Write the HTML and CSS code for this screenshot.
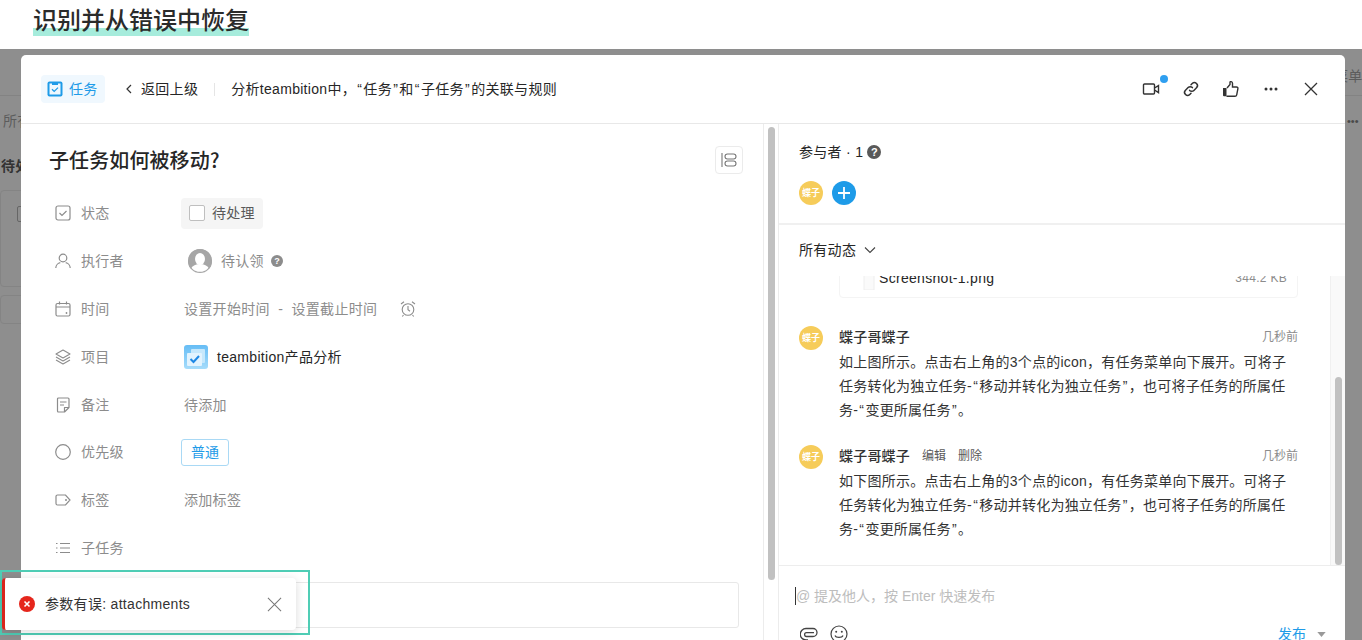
FILE: index.html
```html
<!DOCTYPE html>
<html lang="zh">
<head>
<meta charset="utf-8">
<title>识别并从错误中恢复</title>
<link rel="stylesheet" href="styles.css">
</head>
<body>
<header class="page-head"><h1 class="page-title">识别并从错误中恢复</h1></header>
<main class="stage">
  <div class="behind">
    <div class="behind-line"></div>
    <span class="behind-text b-all">所有</span>
    <span class="behind-text b-todo">待处</span>
    <div class="behind-card b-card1"><span class="b-check"></span></div>
    <div class="behind-card b-card2"></div>
    <span class="behind-text b-menu">菜单</span>
    <span class="behind-text b-dots">•••</span>
  </div>
  <section class="modal">
    <div class="modal-head">
      <span class="type-chip">
        <svg class="ic16" viewBox="0 0 16 16"><rect x=".5" y=".5" width="15" height="15" rx="2" fill="#1e9be8"/><rect x="2.500" y="2.500" width="11" height="11" fill="#eef8fe"/><rect x="5" y="2" width="6" height="2" fill="#1e9be8"/><path d="M5 8.200l2.200 2.200 3.800-3.800" fill="none" stroke="#1e9be8" stroke-width="1.300"/></svg>
        任务
      </span>
      <span class="back">
        <svg class="ic10" viewBox="0 0 10 10"><path d="M7 1L3 5l4 4" fill="none" stroke="#333" stroke-width="1.2"/></svg>
        返回上级
      </span>
      <span class="crumb-sep"></span>
      <span class="crumb">分析teambition中，<span class="q">“</span>任务<span class="q">”</span>和<span class="q">“</span>子任务<span class="q">”</span>的关联与规则</span>
      <div class="head-actions">
        <span class="act act-video">
          <svg class="ic18" viewBox="0 0 18 18"><rect x="1.500" y="4" width="11" height="10" rx="1" fill="none" stroke="#333" stroke-width="1.400"/><path d="M12.500 8l4-2.400v7L12.500 10" fill="none" stroke="#333" stroke-width="1.400"/></svg>
          <i class="dot"></i>
        </span>
        <span class="act">
          <svg class="ic18" viewBox="0 0 18 18"><g fill="none" stroke="#333" stroke-width="1.500" stroke-linecap="round"><path d="M7.600 10.400a3 3 0 0 0 4.300 0l2.600-2.600a3 3 0 0 0-4.300-4.300L9 4.700"/><path d="M10.400 7.600a3 3 0 0 0-4.300 0l-2.600 2.600a3 3 0 0 0 4.300 4.300L9 13.300"/></g></svg>
        </span>
        <span class="act">
          <svg class="ic18" viewBox="0 0 18 18"><path d="M1 8h3.500v8.300H2a1 1 0 0 1-1-1z" fill="#333"/><path d="M5 8l3-3.500V2.200c0-.9 2.300-.9 2.500 1V7h4c1 0 1.600.8 1.400 1.700l-1.200 6.100c-.2.900-.8 1.500-1.700 1.500H4.500" fill="none" stroke="#333" stroke-width="1.400"/></svg>
        </span>
        <span class="act">
          <svg class="ic18" viewBox="0 0 18 18"><g fill="#333"><circle cx="4" cy="9" r="1.500"/><circle cx="9" cy="9" r="1.500"/><circle cx="14" cy="9" r="1.500"/></g></svg>
        </span>
        <span class="act">
          <svg class="ic18" viewBox="0 0 18 18"><path d="M3 3l12 12M15 3L3 15" stroke="#333" stroke-width="1.300" fill="none"/></svg>
        </span>
      </div>
    </div>
    <div class="modal-body">
      <div class="left-pane">
        <div class="title-row">
          <h2 class="task-title">子任务如何被移动?</h2>
          <span class="layout-btn">
            <svg class="ic16" viewBox="0 0 16 16"><g fill="none" stroke="#777" stroke-width="1.100"><path d="M1 1v14"/><rect x="4" y="2" width="11" height="5" rx="2.500"/><rect x="4" y="9" width="11" height="5" rx="2.500"/></g></svg>
          </span>
        </div>
        <div class="row">
          <svg class="row-ic" viewBox="0 0 16 16"><rect x="1" y="1" width="14" height="14" rx="2" fill="none" stroke="#8c8c8c" stroke-width="1.200"/><path d="M4.500 8l2.500 2.500 4.500-4.500" fill="none" stroke="#8c8c8c" stroke-width="1.200"/></svg>
          <span class="row-label">状态</span>
          <span class="status-chip"><i class="status-box"></i>待处理</span>
        </div>
        <div class="row">
          <svg class="row-ic" viewBox="0 0 16 16"><g fill="none" stroke="#8c8c8c" stroke-width="1.200"><circle cx="8" cy="5" r="3.800"/><path d="M.8 15c0-3 2.500-5 4.500-5.400M15.200 15c0-3-2.500-5-4.500-5.400"/></g></svg>
          <span class="row-label">执行者</span>
          <span class="assignee">
            <svg class="ic24" viewBox="0 0 24 24"><circle cx="12" cy="12" r="12" fill="#a6a6a6"/><ellipse cx="12" cy="10" rx="5" ry="6" fill="#fff"/><path d="M2.500 20c2-3.500 5.500-5 9.500-5s7.500 1.500 9.500 5A12 12 0 0 1 2.500 20z" fill="#fff"/><circle cx="12" cy="12" r="11.400" fill="none" stroke="#a6a6a6" stroke-width="1.200"/></svg>
            <span class="muted">待认领</span>
            <span class="help-small">?</span>
          </span>
        </div>
        <div class="row">
          <svg class="row-ic" viewBox="0 0 16 16"><g fill="none" stroke="#8c8c8c" stroke-width="1.200"><rect x="1" y="2.500" width="14" height="12.500" rx="1.500"/><path d="M1 6h14M4.500 .5v3M11.500 .5v3"/></g><circle cx="11.500" cy="12" r=".9" fill="#8c8c8c"/></svg>
          <span class="row-label">时间</span>
          <span class="muted">设置开始时间 &nbsp;-&nbsp; 设置截止时间</span>
          <svg class="alarm" viewBox="0 0 16 16"><g fill="none" stroke="#8c8c8c" stroke-width="1.100"><circle cx="8" cy="8.500" r="5.800"/><path d="M8 5v3.800l2 1.500M1 3l3-2.300M15 3l-3-2.300M3.500 14l-1.200 1.500M12.500 14l1.200 1.500"/></g></svg>
        </div>
        <div class="row">
          <svg class="row-ic" viewBox="0 0 16 16"><g fill="none" stroke="#8c8c8c" stroke-width="1.100" stroke-linejoin="round"><path d="M8 1l7 4-7 4-7-4z"/><path d="M1 8l7 4 7-4M1 11l7 4 7-4"/></g></svg>
          <span class="row-label">项目</span>
          <span class="project">
            <svg class="ic24" viewBox="0 0 24 24"><defs><linearGradient id="projectFill" x1="0" y1="0" x2="0" y2="1"><stop offset="0" stop-color="#66bdf5"/><stop offset="1" stop-color="#a6dcfb"/></linearGradient></defs><rect width="24" height="24" rx="3" fill="url(#projectFill)"/><rect x="7" y="4" width="14" height="14" rx="1" fill="#c6e8fc"/><rect x="3" y="8" width="15" height="13" rx="1" fill="#e2f3fe"/><path d="M6.500 14l3 3 5.500-6" fill="none" stroke="#1e88e5" stroke-width="2"/></svg>
            <span class="strong">teambition产品分析</span>
          </span>
        </div>
        <div class="row">
          <svg class="row-ic" viewBox="0 0 16 16"><g fill="none" stroke="#8c8c8c" stroke-width="1.200" stroke-linejoin="round"><path d="M9.500 15H3.500a1 1 0 0 1-1-1V2a1 1 0 0 1 1-1h9.500a1 1 0 0 1 1 1v8.500z"/><path d="M5 5h6.500M5 8h4M9.500 15v-4.500H14"/></g></svg>
          <span class="row-label">备注</span>
          <span class="muted">待添加</span>
        </div>
        <div class="row">
          <svg class="row-ic" viewBox="0 0 16 16"><circle cx="8" cy="8" r="7.300" fill="none" stroke="#8c8c8c" stroke-width="1.200"/></svg>
          <span class="row-label">优先级</span>
          <span class="priority">普通</span>
        </div>
        <div class="row">
          <svg class="row-ic" viewBox="0 0 16 16"><path d="M2.500 3h8l4.500 5-4.500 5h-8a1.500 1.500 0 0 1-1.500-1.500v-7A1.500 1.500 0 0 1 2.500 3z" fill="none" stroke="#8c8c8c" stroke-width="1.200"/><circle cx="11" cy="8" r="1" fill="#8c8c8c"/></svg>
          <span class="row-label">标签</span>
          <span class="muted">添加标签</span>
        </div>
        <div class="row">
          <svg class="row-ic" viewBox="0 0 16 16"><g fill="none" stroke="#8c8c8c" stroke-width="1.200"><path d="M5 3.500h10M5 8h10M5 12.500h10"/><path d="M1 3.500h1.500M1 8h1.500M1 12.500h1.500"/></g></svg>
          <span class="row-label">子任务</span>
        </div>
        <div class="subtask-box"></div>
      </div>
      <div class="pane-scroll"><div class="pane-thumb"></div></div>
      <div class="right-pane">
        <div class="members">
          <div class="members-title">参与者 · 1 <span class="help-big">?</span></div>
          <div class="members-row">
            <span class="avatar">蝶子</span>
            <span class="add-member">
              <svg class="ic12" viewBox="0 0 12 12"><path d="M6 0v12M0 6h12" stroke="#fff" stroke-width="1.800"/></svg>
            </span>
          </div>
        </div>
        <div class="feed-head">所有动态
          <svg class="ic12" viewBox="0 0 12 12"><path d="M1 3.500l5 5 5-5" fill="none" stroke="#444" stroke-width="1.100"/></svg>
        </div>
        <div class="feed">
          <div class="feed-list">
            <div class="file-card">
              <svg class="file-ic" viewBox="0 0 12 24"><path d="M1 0h10v24H1z" fill="#fafafa" stroke="#eeeeee"/></svg>
              <span class="file-name">Screenshot-1.png</span>
              <span class="file-size">344.2 KB</span>
            </div>
            <article class="comment">
              <span class="avatar">蝶子</span>
              <div class="comment-main">
                <div class="comment-head"><span class="author">蝶子哥蝶子</span><span class="time">几秒前</span></div>
                <p class="comment-text">如上图所示。点击右上角的3个点的icon，有任务菜单向下展开。可将子<br>任务转化为独立任务-<span class="q">“</span>移动并转化为独立任务<span class="q">”</span>，也可将子任务的所属任<br>务-<span class="q">“</span>变更所属任务<span class="q">”</span>。</p>
              </div>
            </article>
            <article class="comment">
              <span class="avatar">蝶子</span>
              <div class="comment-main">
                <div class="comment-head"><span class="author">蝶子哥蝶子</span><span class="link">编辑</span><span class="link">删除</span><span class="time">几秒前</span></div>
                <p class="comment-text">如下图所示。点击右上角的3个点的icon，有任务菜单向下展开。可将子<br>任务转化为独立任务-<span class="q">“</span>移动并转化为独立任务<span class="q">”</span>，也可将子任务的所属任<br>务-<span class="q">“</span>变更所属任务<span class="q">”</span>。</p>
              </div>
            </article>
          </div>
          <div class="feed-scroll"><div class="feed-thumb"></div></div>
        </div>
        <div class="composer">
          <div class="composer-input"><i class="caret"></i><span class="placeholder">@ 提及他人，按 Enter 快速发布</span></div>
          <div class="composer-tools">
            <svg class="tool" viewBox="0 0 18 18"><path d="M8 15H6a5.500 5.500 0 0 1 0-11.500h7a4 4 0 0 1 0 8H6.500a1.800 1.800 0 0 1 0-3.800H14" fill="none" stroke="#444" stroke-width="1.300"/></svg>
            <svg class="tool" viewBox="0 0 18 18"><g fill="none" stroke="#444" stroke-width="1.200"><circle cx="9" cy="9" r="8"/><path d="M5 10.500c1 2.500 7 2.500 8 0"/></g><circle cx="6.200" cy="6.800" r="1" fill="#444"/><circle cx="11.800" cy="6.800" r="1" fill="#444"/></svg>
            <span class="publish">发布</span>
            <svg class="publish-arrow" viewBox="0 0 10 6"><path d="M0 0h10L5 6z" fill="#999"/></svg>
          </div>
        </div>
      </div>
    </div>
  </section>
  <div class="toast-frame">
    <div class="toast">
      <span class="toast-ic">
        <svg class="ic8" viewBox="0 0 8 8"><path d="M1.500 1.500l5 5M6.500 1.500l-5 5" stroke="#fff" stroke-width="1.600"/></svg>
      </span>
      <span class="toast-text">参数有误: attachments</span>
      <svg class="toast-close" viewBox="0 0 16 16"><path d="M1 1l14 14M15 1L1 15" stroke="#777" stroke-width="1.100" fill="none"/></svg>
    </div>
  </div>
</main>
</body>
</html>
```
FILE: styles.css
```css
* { box-sizing: border-box; }
html, body { margin: 0; height: 640px; overflow: hidden; }
body {
  font-family: "Liberation Sans", "Noto Sans CJK SC", sans-serif;
  font-size: 14px;
  line-height: 20px;
  letter-spacing: .3px;
  color: #262626;
  background: #fff;
}
svg { display: block; flex: none; }
.ic8 { width: 8px; height: 8px; }
.ic10 { width: 10px; height: 10px; }
.ic12 { width: 12px; height: 12px; }
.ic16 { width: 16px; height: 16px; }
.ic18 { width: 18px; height: 18px; }
.ic24 { width: 24px; height: 24px; }
.q { padding: 0 1.200px; }

.page-head { height: 49px; padding: 5px 0 0 33px; background: #fff; }
.page-title {
  display: inline-block;
  margin: 0;
  font-size: 24px;
  font-weight: 500;
  line-height: 32px;
  letter-spacing: 0;
  color: #2b2b2b;
  background: linear-gradient(to bottom, transparent 0, transparent 23px, #a6ecdc 23px, #a6ecdc 31px, transparent 31px);
}

.stage {
  position: relative;
  height: 591px;
  padding: 6px 17px 0 21px;
  background: #8e8e8e;
  overflow: hidden;
}
.behind { position: absolute; inset: 0; }
.behind-line { position: absolute; left: 0; right: 0; top: 46px; height: 1px; background: #838383; }
.behind-text { position: absolute; color: #5c5c5c; white-space: nowrap; }
.b-all { left: 3px; top: 62px; }
.b-todo { left: 1px; top: 107px; font-weight: 700; color: #333; }
.b-menu { left: 1334px; top: 17px; }
.b-dots { left: 1347px; top: 62px; font-size: 11px; letter-spacing: 0; color: #4a4a4a; }
.behind-card { position: absolute; left: 0; width: 30px; border: 1px solid #848484; border-radius: 4px; }
.b-card1 { top: 141px; height: 97px; }
.b-card2 { top: 246px; height: 29px; }
.b-check { display: block; width: 10px; height: 16px; margin: 15px 0 0 16px; border: 1px solid #666; border-radius: 2px; }

.modal {
  position: relative;
  height: 600px;
  background: #fff;
  border-radius: 5px 5px 0 0;
  overflow: hidden;
}
.modal-head {
  display: flex;
  align-items: center;
  height: 69px;
  padding: 0 25px 0 20px;
  border-bottom: 1px solid #e8e8e8;
}
.type-chip {
  display: flex;
  align-items: center;
  gap: 6px;
  height: 28px;
  padding: 0 6px;
  width: 64px;
  border-radius: 4px;
  background: #f0f8fe;
  color: #1e9be8;
}
.back { display: flex; align-items: center; gap: 7px; margin-left: 19px; color: #262626; }
.crumb-sep { width: 1px; height: 13px; margin: 0 16px; background: #e5e5e5; }
.crumb { color: #262626; white-space: nowrap; }
.head-actions { display: flex; align-items: center; gap: 22px; margin-left: auto; }
.act { position: relative; display: block; }
.dot { position: absolute; right: -8px; top: -5px; width: 8px; height: 8px; border-radius: 50%; background: #2f9ff0; }

.modal-body { display: flex; height: 531px; }
.left-pane { width: 742px; flex: none; padding: 22px 24px 0 29px; }
.title-row { display: flex; align-items: center; justify-content: space-between; height: 28px; margin-bottom: 15.500px; }
.task-title {
  margin: 0 0 0 -1px;
  font-family: "Noto Sans CJK SC", "Liberation Sans", sans-serif;
  font-size: 20px;
  font-weight: 500;
  line-height: 28px;
  letter-spacing: .1px;
  color: #262626;
}
.layout-btn {
  display: flex;
  align-items: center;
  justify-content: center;
  width: 28px;
  height: 28px;
  margin-right: -4px;
  border: 1px solid #ebebeb;
  border-radius: 4px;
}
.row { display: flex; align-items: center; height: 47.800px; padding-left: 5px; white-space: nowrap; }
.row-ic { width: 16px; height: 16px; margin-right: 10px; }
.row-label { width: 103px; flex: none; color: #8c8c8c; }
.muted { color: #8c8c8c; }
.strong { color: #262626; }
.status-chip {
  display: flex;
  align-items: center;
  gap: 7px;
  height: 31px;
  margin-left: -3px;
  padding: 0 8px;
  border-radius: 4px;
  background: #f5f5f5;
  color: #595959;
}
.status-box { width: 16px; height: 16px; border: 1px solid #bfbfbf; border-radius: 2px; background: #fff; }
.assignee { display: flex; align-items: center; margin-left: 4px; gap: 9px; }
.help-small {
  width: 12px;
  height: 12px;
  margin-left: -2px;
  border-radius: 50%;
  background: #8c8c8c;
  color: #fff;
  font-size: 9px;
  font-weight: 700;
  line-height: 12px;
  letter-spacing: 0;
  text-align: center;
}
.alarm { width: 16px; height: 16px; margin-left: 23px; }
.project { display: flex; align-items: center; gap: 9px; }
.priority {
  height: 27px;
  margin-left: -3px;
  padding: 0 9px;
  line-height: 25px;
  letter-spacing: 0;
  border: 1px solid #a9d9f5;
  border-radius: 3px;
  color: #1e9be8;
}
.subtask-box { height: 46px; margin-top: 10px; border: 1px solid #e8e8e8; border-radius: 3px; }

.pane-scroll {
  width: 16px;
  flex: none;
  padding: 3px 3px 0 4px;
  border-left: 1px solid #ececec;
  border-right: 1px solid #ececec;
}
.pane-thumb { height: 453px; border-radius: 4px; background: #c1c1c1; }

.right-pane { flex: 1; min-width: 0; display: flex; flex-direction: column; }
.members { height: 101px; padding: 18px 0 0 20px; border-bottom: 2px solid #f0f0f0; flex: none; }
.members-title { display: flex; align-items: center; gap: 4px; color: #262626; }
.help-big {
  width: 14px;
  height: 14px;
  border-radius: 50%;
  background: #595959;
  color: #fff;
  font-size: 11px;
  font-weight: 700;
  line-height: 14px;
  letter-spacing: 0;
  text-align: center;
}
.members-row { display: flex; gap: 9px; margin-top: 19px; }
.avatar {
  display: block;
  width: 24px;
  height: 24px;
  flex: none;
  border-radius: 50%;
  background: #f6cc5a;
  color: #fff;
  font-size: 9px;
  font-weight: 700;
  line-height: 24px;
  letter-spacing: 0;
  text-align: center;
}
.add-member {
  display: flex;
  align-items: center;
  justify-content: center;
  width: 24px;
  height: 24px;
  border-radius: 50%;
  background: #1e9be8;
}
.feed-head { display: flex; align-items: center; gap: 8px; height: 51px; padding: 0 0 1px 20px; color: #262626; flex: none; }
.feed { display: flex; height: 289px; flex: none; overflow: hidden; }
.feed-list { flex: 1; min-width: 0; padding: 0 32px 0 20px; overflow: hidden; }
.file-card {
  display: flex;
  height: 44px;
  margin: -22px 0 0 40px;
  padding: 13px 10px 0 23px;
  line-height: 20px;
  border: 1px solid #f4f4f4;
  border-radius: 4px;
  color: #262626;
}
.file-ic { width: 12px; height: 24px; margin: -2px 4px 0 0; }
.file-size { margin-left: auto; font-size: 12px; color: #8c8c8c; }
.comment { display: flex; gap: 16px; margin-top: 26px; }
.comment + .comment { margin-top: 21px; }
.comment-main { flex: 1; min-width: 0; }
.comment-head { display: flex; align-items: center; height: 25px; margin-bottom: 1px; }
.comment .avatar { margin-top: 2px; }
.author { font-weight: 500; margin-right: 12px; letter-spacing: .2px; color: #333; }
.link { margin-right: 12px; font-size: 12px; letter-spacing: 0; color: #595959; }
.time { margin-left: auto; font-size: 12px; letter-spacing: 0; color: #8c8c8c; }
.comment-text { margin: 0; line-height: 24px; color: #333; white-space: nowrap; letter-spacing: .23px; }
.feed-scroll { width: 15px; flex: none; padding: 101px 3px 0 4px; background: #f9f9f9; border-left: 1px solid #f0f0f0; }
.feed-thumb { height: 188px; border-radius: 4px; background: #c1c1c1; }

.composer { flex: none; padding: 20px 19px 0 16px; border-top: 1px solid #ededed; letter-spacing: 0; }
.composer-input { display: flex; align-items: center; height: 20px; }
.caret { width: 1px; height: 18px; background: #333; }
.placeholder { color: #bdbdbd; white-space: nowrap; }
.composer-tools { display: flex; align-items: center; gap: 12px; height: 20px; margin-top: 18px; padding-left: 5px; }
.tool { width: 18px; height: 18px; }
.publish { margin-left: auto; color: #1e9be8; }
.publish-arrow { width: 9px; height: 5px; margin-left: -1px; }

.toast-frame {
  position: absolute;
  left: 0;
  top: 521px;
  width: 310px;
  height: 65px;
  padding: 6px 12px 0 0;
  border: 2px solid #4fcdb5;
}
.toast {
  display: flex;
  align-items: center;
  height: 52px;
  padding: 0 14px;
  background: #fff;
  border-left: 3px solid #d9251c;
  border-radius: 4px;
  box-shadow: 0 2px 10px rgba(0, 0, 0, .15);
}
.toast-ic {
  display: flex;
  align-items: center;
  justify-content: center;
  width: 16px;
  height: 16px;
  border-radius: 50%;
  background: #e5261c;
}
.toast-text { margin-left: 10px; color: #333; white-space: nowrap; }
.toast-close { width: 15px; height: 15px; margin-left: auto; }
```
